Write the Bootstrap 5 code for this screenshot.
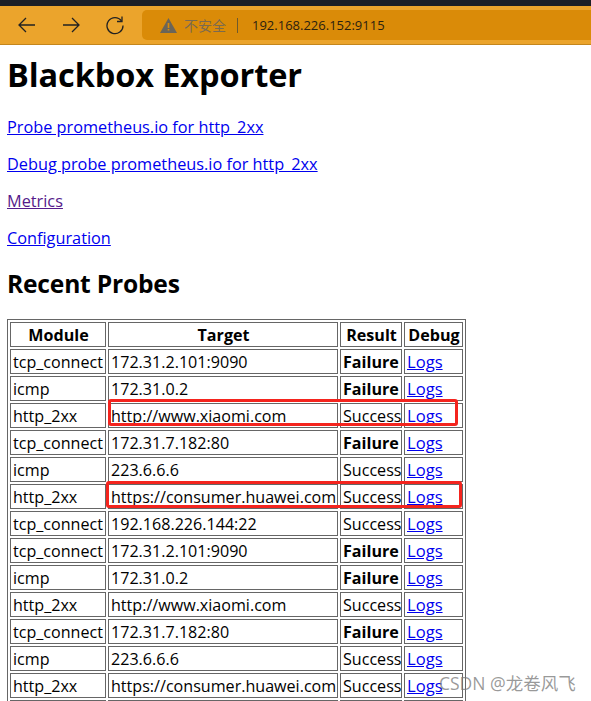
<!DOCTYPE html>
<html lang="en">
<head>
  <meta charset="UTF-8">
  <title>Blackbox Exporter</title>
  <link href="https://cdn.jsdelivr.net/npm/bootstrap@5.3.3/dist/css/bootstrap.min.css" rel="stylesheet">
  <style>
    html, body { height: 701px; overflow: hidden; }
    body {
      background: #fff;
      color: #000;
      font-family: "Open Sans", "Noto Sans", sans-serif;
      font-size: 16.3px;
      line-height: 21px;
      position: relative;
    }
    .tab-strip { height: 6px; background: #1c1f26; }
    .tool-bar {
      height: 39px;
      background: #eba42c;
      border-bottom: 1px solid #c4861d;
      padding-left: 17px;
      gap: 24px;
    }
    .tool-bar svg { display: block; }
    .addr-box {
      background: #da8b08;
      border-radius: 5px 0 0 5px;
      height: 30px;
      margin-left: -7px;
      padding-left: 18px;
      font-size: 13px;
    }
    .warn-text { color: #7a6a50; font-family: "Noto Sans CJK SC", sans-serif; font-size: 14px; margin-left: 7px; }
    .addr-sep { width: 1px; height: 15px; background: #6f5a2c; margin: 0 14px 0 11px; }
    .addr-url { color: #2b2110; font-family: "Open Sans", sans-serif; }
    .page-body { padding: 0 7px; }
    .page-title { font-size: 32.5px; font-weight: 700; line-height: 44px; margin: 8px 0 20px; letter-spacing: -.1px; }
    .page-link { margin: 0 0 16px; }
    .page-link a { color: #00e; }
    .page-link a.seen { color: #551a8b; }
    .sub-title { font-size: 24.6px; font-weight: 700; line-height: 32px; margin: 19px 0 19px; letter-spacing: -.2px; }
    .probe-table {
      border: 1px solid #666;
      border-collapse: separate;
      border-spacing: 2px;
      table-layout: fixed;
      width: 459px;
      font-size: 16.1px;
    }
    .probe-table th, .probe-table td {
      border: 1px solid #666;
      padding: 0 1px 0 2px;
      height: 25px;
      line-height: 22px;
      white-space: nowrap;
      overflow: hidden;
    }
    .probe-table th { text-align: center; }
    .probe-table td a { color: #00e; font-size: 16.6px; }
    .red-box {
      position: absolute;
      border: 3px solid #f4241e;
      border-radius: 3px;
    }
    .box-one { left: 108px; top: 399px; width: 350px; height: 27px; }
    .box-two { left: 106px; top: 481px; width: 356px; height: 27px; }
    .mark-text {
      position: absolute;
      left: 439px;
      top: 671px;
      color: rgba(120,120,120,.75);
      font-size: 17.5px;
      line-height: 24px;
      font-family: "Open Sans", "Noto Sans CJK SC", sans-serif;
    }
  </style>
</head>
<body>
  <div class="tab-strip"></div>
  <div class="tool-bar d-flex align-items-center">
    <svg width="20" height="20" viewBox="0 0 20 20" fill="none" stroke="#222" stroke-width="1.3"><path d="M18 10H2M9 3l-7 7 7 7"/></svg>
    <svg width="20" height="20" viewBox="0 0 20 20" fill="none" stroke="#222" stroke-width="1.3"><path d="M2 10h16M11 3l7 7-7 7"/></svg>
    <svg width="20" height="20" viewBox="0 0 20 20" fill="none" stroke="#222" stroke-width="1.3"><path d="M16.5 6A8 8 0 1 0 18 10.500"/><path d="M17 1.500V6.500H12"/></svg>
    <div class="addr-box flex-grow-1 d-flex align-items-center">
      <svg width="17" height="15" viewBox="0 0 17 15"><path d="M8.500 0L17 15H0z" fill="#6b6558"/><path d="M7.700 5h1.600v5H7.700zM7.700 11h1.600v1.600H7.700z" fill="#da8b08"/></svg>
      <span class="warn-text">不安全</span>
      <span class="addr-sep"></span>
      <span class="addr-url">192.168.226.152:9115</span>
    </div>
  </div>

  <div class="page-body">
    <h1 class="page-title">Blackbox Exporter</h1>
    <p class="page-link"><a href="#">Probe prometheus.io for http_2xx</a></p>
    <p class="page-link"><a href="#">Debug probe prometheus.io for http_2xx</a></p>
    <p class="page-link"><a href="#" class="seen">Metrics</a></p>
    <p class="page-link"><a href="#">Configuration</a></p>
    <h2 class="sub-title">Recent Probes</h2>
    <table class="probe-table">
      <colgroup><col style="width:96px"><col style="width:230px"><col style="width:62px"><col style="width:59px"></colgroup>
      <thead><tr><th>Module</th><th>Target</th><th>Result</th><th>Debug</th></tr></thead>
      <tbody id="rows"></tbody>
    </table>
  </div>

  <div class="red-box box-one"></div>
  <div class="red-box box-two"></div>
  <div class="mark-text">CSDN @龙卷风飞</div>

  <script>
    const probes = [
      ['tcp_connect', '172.31.2.101:9090', 'Failure'],
      ['icmp', '172.31.0.2', 'Failure'],
      ['http_2xx', 'http://www.xiaomi.com', 'Success'],
      ['tcp_connect', '172.31.7.182:80', 'Failure'],
      ['icmp', '223.6.6.6', 'Success'],
      ['http_2xx', 'https://consumer.huawei.com', 'Success'],
      ['tcp_connect', '192.168.226.144:22', 'Success'],
      ['tcp_connect', '172.31.2.101:9090', 'Failure'],
      ['icmp', '172.31.0.2', 'Failure'],
      ['http_2xx', 'http://www.xiaomi.com', 'Success'],
      ['tcp_connect', '172.31.7.182:80', 'Failure'],
      ['icmp', '223.6.6.6', 'Success'],
      ['http_2xx', 'https://consumer.huawei.com', 'Success'],
      ['tcp_connect', '192.168.226.144:22', 'Success']
    ];
    document.getElementById('rows').innerHTML = probes.map(p => `
      <tr>
        <td>${p[0]}</td>
        <td>${p[1]}</td>
        <td>${p[2] === 'Failure' ? '<b>Failure</b>' : p[2]}</td>
        <td><a href="#">Logs</a></td>
      </tr>`).join('');
  </script>
  <script src="https://cdn.jsdelivr.net/npm/bootstrap@5.3.3/dist/js/bootstrap.bundle.min.js"></script>
</body>
</html>
